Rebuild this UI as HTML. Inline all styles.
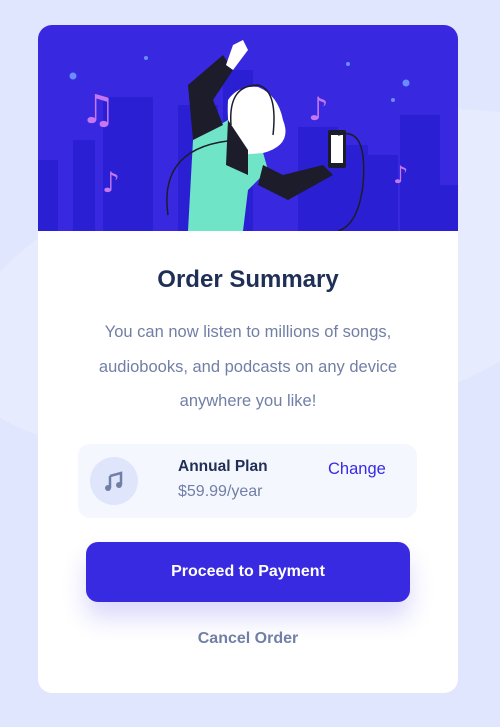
<!DOCTYPE html>
<html><head><style>
body{margin:0;width:500px;height:727px;background:#e0e6fd;font-family:"Liberation Sans",sans-serif;position:relative;overflow:hidden}
.wave{position:absolute;left:-50px;top:130px;width:700px;height:300px;background:#e6ebfd;border-radius:50%;transform:rotate(-15deg)}
.card{position:absolute;left:38px;top:25px;width:420px;height:668px;background:#fff;border-radius:14px;overflow:hidden}
.hero{height:206px;background:#3829e0;position:relative}
h1{margin:0;position:absolute;top:241px;width:100%;text-align:center;font-size:24px;color:#1f2f56}
p{position:absolute;top:290px;left:0;width:100%;text-align:center;margin:0;font-size:16.5px;line-height:34.5px;color:#717fa6}
.plan{position:absolute;left:40px;top:419px;width:339px;height:74px;background:#f5f7ff;border-radius:12px}
.ic{position:absolute;left:12px;top:13px;width:48px;height:48px;border-radius:50%;background:#dfe6fb}
.pn{position:absolute;left:100px;top:14px;font-weight:bold;font-size:15.5px;color:#1f2f56}
.pp{position:absolute;left:100px;top:39px;font-size:16px;color:#717fa6}
.ch{position:absolute;left:250px;top:16px;font-size:16.5px;color:#382ae1}
.btn{position:absolute;left:48px;top:517px;width:324px;height:60px;background:#382ae1;border-radius:12px;color:#fff;font-weight:bold;font-size:16px;text-align:center;line-height:60px;box-shadow:0 16px 24px rgba(56,42,225,.18)}
.cancel{position:absolute;top:605px;width:100%;text-align:center;font-weight:bold;font-size:16px;color:#717fa6}
</style></head><body>
<div class="wave"></div>
<div class="card">
<div class="hero">
<svg width="420" height="206" viewBox="0 0 420 206">
<g fill="#2b1fd3">
<rect x="0" y="135" width="20" height="71"/><rect x="35" y="115" width="22" height="91"/><rect x="65" y="72" width="50" height="134"/><rect x="140" y="80" width="40" height="126"/><rect x="185" y="45" width="30" height="161"/><rect x="260" y="102" width="40" height="104"/><rect x="300" y="120" width="30" height="86"/><rect x="330" y="130" width="30" height="76"/><rect x="362" y="90" width="40" height="116"/><rect x="400" y="160" width="20" height="46"/>
</g>
<g fill="#6b8cff"><circle cx="35" cy="51" r="3.5"/><circle cx="108" cy="33" r="2"/><circle cx="368" cy="58" r="3.5"/><circle cx="355" cy="75" r="2"/><circle cx="310" cy="39" r="2"/></g>
<g fill="#c576f0" font-size="40" font-family="DejaVu Sans">
<text x="42" y="98">♫</text><text x="270" y="95" font-size="32">♪</text><text x="64" y="167" font-size="28">♪</text><text x="355" y="158" font-size="24">♪</text></g>
<path d="M150 206 L155 115 L190 95 L220 110 L230 145 L210 165 L205 206Z" fill="#6fe4c7"/>
<path d="M155 115 L150 60 L185 30 L195 45 L175 75 L185 100Z" fill="#1c1c2a"/>
<path d="M188 40 L195 20 L205 15 L210 25 L195 45Z" fill="#fff"/>
<path d="M190 75 Q200 60 220 62 Q240 70 245 95 Q255 120 225 128 L200 130 Q188 110 190 75Z" fill="#fff"/>
<path d="M190 95 L188 140 L210 150 L210 125Z" fill="#1c1c2a"/>
<path d="M225 140 L245 150 L285 140 L295 150 L250 175 L220 160Z" fill="#1c1c2a"/>
<rect x="290" y="105" width="18" height="38" rx="2" fill="#1c1c2a"/><rect x="293" y="110" width="12" height="28" fill="#fff"/>
<path d="M193 100 Q190 60 220 60 Q240 65 235 110 M130 190 Q120 120 200 115 M300 110 Q330 100 325 160 Q320 200 300 206" stroke="#1c1c2a" stroke-width="1.5" fill="none"/>
</svg>
</div>
<h1>Order Summary</h1>
<p>You can now listen to millions of songs,<br>audiobooks, and podcasts on any device<br>anywhere you like!</p>
<div class="plan"><div class="ic"><svg width="48" height="48" viewBox="0 0 48 48"><path d="M20 19 L31 16 V28 M20 19 V31" stroke="#717fa6" stroke-width="2.5" fill="none"/><circle cx="18" cy="31" r="3" fill="#717fa6"/><circle cx="29" cy="28" r="3" fill="#717fa6"/></svg></div>
<div class="pn">Annual Plan</div><div class="pp">$59.99/year</div><div class="ch">Change</div></div>
<div class="btn">Proceed to Payment</div>
<div class="cancel">Cancel Order</div>
</div>
</body></html>
